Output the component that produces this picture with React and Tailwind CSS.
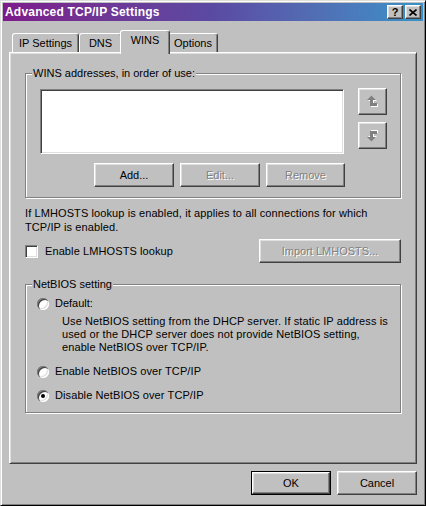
import React from "react";

const raised =
  "bg-[#c0c0c0] border border-t-white border-l-white border-r-[#404040] border-b-[#404040] shadow-[inset_-1px_-1px_0_#808080,inset_1px_1px_0_#dfdfdf]";
const sunken =
  "border border-t-[#808080] border-l-[#808080] border-r-white border-b-white shadow-[inset_1px_1px_0_#404040,inset_-1px_-1px_0_#dfdfdf]";
const groupBox =
  "border border-[#808080] shadow-[inset_1px_1px_0_#fff,1px_1px_0_#fff]";
const disabledText = "text-[#808080] [text-shadow:1px_1px_0_#fff]";

function Btn({ children, disabled, className = "" }) {
  return (
    <div
      className={`${raised} flex items-center justify-center h-[24px] ${className} ${
        disabled ? disabledText : "text-black"
      }`}
    >
      {children}
    </div>
  );
}

function Radio({ checked }) {
  return (
    <span className="flex items-center justify-center w-[12px] h-[12px] rounded-full bg-white shadow-[inset_1px_1px_0_#808080,inset_2px_2px_0_#404040,inset_-1px_-1px_0_#fff,inset_-2px_-2px_0_#dfdfdf] shrink-0">
      {checked && <span className="block w-[4px] h-[4px] rounded-full bg-black" />}
    </span>
  );
}

const arrowPts = "0,5 4.5,0.5 9,5 6,5 6,8 10,8 10,11 3,11 3,5";

function ArrowIcon({ down }) {
  return (
    <svg width="12" height="13" viewBox="0 0 12 13" className={down ? "-scale-y-100" : ""}>
      <polygon points={arrowPts} transform="translate(1 1)" fill="#fff" />
      <polygon points={arrowPts} fill="#808080" />
    </svg>
  );
}

function Tab({ label, w, active }) {
  if (active) {
    return (
      <div
        className={`relative z-10 -mx-[2px] -mb-[2px] h-[24px] ${w} bg-[#c0c0c0] border-t border-l border-r border-t-white border-l-white border-r-[#404040] rounded-t-[3px] shadow-[inset_-1px_0_0_#808080] flex justify-center pt-[3px]`}
      >
        {label}
      </div>
    );
  }
  return (
    <div
      className={`h-[19px] ${w} bg-[#c0c0c0] border-t border-l border-r border-t-white border-l-white border-r-[#404040] rounded-t-[3px] shadow-[inset_-1px_0_0_#808080] flex justify-center pt-[3px]`}
    >
      {label}
    </div>
  );
}

export default function App() {
  return (
    <div className="w-[426px] h-[506px] bg-[#c0c0c0] border border-t-[#dfdfdf] border-l-[#dfdfdf] border-r-black border-b-black shadow-[inset_1px_1px_0_#fff,inset_-1px_-1px_0_#808080] p-[2px] flex flex-col font-['Liberation_Sans',Arial,sans-serif] text-[11px] leading-[13px] text-black select-none">
      {/* Title bar */}
      <div className="h-[18px] shrink-0 bg-gradient-to-r from-[#7d1a8b] via-[#5a4aa2] to-[#3592c8] flex items-center pl-[2px] pr-[2px]">
        <span className="text-white font-bold text-[12px] leading-[14px] tracking-[0.2px]">
          Advanced TCP/IP Settings
        </span>
        <div className="ml-auto flex gap-[2px]">
          <div className={`${raised} w-[16px] h-[14px] flex items-center justify-center font-bold text-[11px] leading-[11px]`}>
            ?
          </div>
          <div className={`${raised} w-[16px] h-[14px] flex items-center justify-center`}>
            <svg width="8" height="7" viewBox="0 0 8 7">
              <path d="M0.5 0.5 L7.5 6.5 M7.5 0.5 L0.5 6.5" stroke="#000" strokeWidth="1.6" />
            </svg>
          </div>
        </div>
      </div>

      {/* Tabs */}
      <div className="mt-[9px] ml-[9px] h-[22px] flex items-end shrink-0">
        <Tab label="IP Settings" w="w-[67px]" />
        <Tab label="DNS" w="w-[43px]" />
        <Tab label="WINS" w="w-[50px]" active />
        <Tab label="Options" w="w-[50px]" />
      </div>

      {/* Panel */}
      <div className="ml-[6px] w-[408px] h-[412px] shrink-0 border border-t-white border-l-white border-r-[#404040] border-b-[#404040] shadow-[inset_1px_1px_0_#dfdfdf,inset_-1px_-1px_0_#808080] p-[1px] flex flex-col">
        <fieldset className={`${groupBox} ml-[14px] mt-[13px] w-[376px] pl-[14px] pb-[10px]`}>
          <legend className="-ml-[8px] px-[1px] bg-[#c0c0c0]">WINS addresses, in order of use:</legend>
          <div className="flex mt-[9px]">
            <div className={`${sunken} bg-white w-[304px] h-[65px]`} />
            <div className="ml-[14px] -mt-px flex flex-col gap-[7px]">
              <div className={`${raised} w-[29px] h-[27px] flex items-center justify-center`}>
                <ArrowIcon />
              </div>
              <div className={`${raised} w-[29px] h-[27px] flex items-center justify-center`}>
                <ArrowIcon down />
              </div>
            </div>
          </div>
          <div className="w-[305px] mt-[9px] flex justify-end gap-[6px]">
            <Btn className="w-[80px]">Add...</Btn>
            <Btn className="w-[80px]" disabled>Edit...</Btn>
            <Btn className="w-[79px]" disabled>Remove</Btn>
          </div>
        </fieldset>

        <p className="ml-[14px] mt-[8px] leading-[14px] w-[376px] tracking-[0.1px]">
          If LMHOSTS lookup is enabled, it applies to all connections for which TCP/IP is enabled.
        </p>

        <div className="ml-[14px] mt-[5px] w-[376px] flex items-center">
          <span className={`${sunken} bg-white w-[13px] h-[13px] shrink-0`} />
          <span className="ml-[7px] tracking-[0.1px]">Enable LMHOSTS lookup</span>
          <Btn className="ml-auto w-[142px]" disabled>Import LMHOSTS...</Btn>
        </div>

        <fieldset className={`${groupBox} ml-[14px] mt-[15px] w-[376px] pl-[11px] pb-[10px]`}>
          <legend className="-ml-[5px] px-[1px] bg-[#c0c0c0]">NetBIOS setting</legend>
          <div className="mt-[6px] flex items-center gap-[6px]">
            <Radio />
            <span>Default:</span>
          </div>
          <p className="ml-[25px] mt-[5px] tracking-[0.1px]">
            Use NetBIOS setting from the DHCP server. If static IP address is
            <br />
            used or the DHCP server does not provide NetBIOS setting,
            <br />
            enable NetBIOS over TCP/IP.
          </p>
          <div className="mt-[11px] flex items-center gap-[6px]">
            <Radio />
            <span className="tracking-[0.1px]">Enable NetBIOS over TCP/IP</span>
          </div>
          <div className="mt-[11px] flex items-center gap-[6px]">
            <Radio checked />
            <span className="tracking-[0.1px]">Disable NetBIOS over TCP/IP</span>
          </div>
        </fieldset>
      </div>

      {/* Bottom buttons */}
      <div className="ml-[6px] w-[408px] mt-[7px] flex justify-end gap-[6px]">
        <div className="border border-black w-[80px] h-[24px] flex">
          <div className={`${raised} flex-1 flex items-center justify-center`}>OK</div>
        </div>
        <Btn className="w-[80px]">Cancel</Btn>
      </div>
    </div>
  );
}
